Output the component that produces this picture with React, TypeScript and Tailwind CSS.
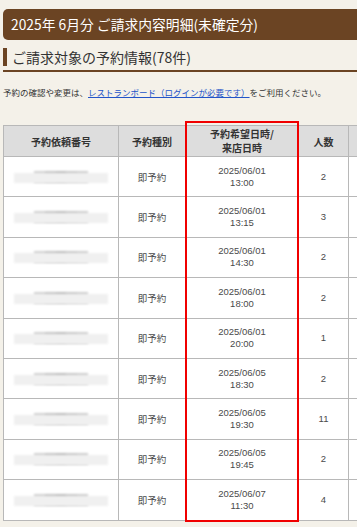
const rows = [
  { date: "2025/06/01", time: "13:00", people: 2 },
  { date: "2025/06/01", time: "13:15", people: 3 },
  { date: "2025/06/01", time: "14:30", people: 2 },
  { date: "2025/06/01", time: "18:00", people: 2 },
  { date: "2025/06/01", time: "20:00", people: 1 },
  { date: "2025/06/05", time: "18:30", people: 2 },
  { date: "2025/06/05", time: "19:30", people: 11 },
  { date: "2025/06/05", time: "19:45", people: 2 },
  { date: "2025/06/07", time: "11:30", people: 4 },
]

function Masked() {
  // blurred-out reservation number
  return (
    <div className="relative h-full">
      <div className="absolute left-[30px] top-1/2 flex h-[12px] w-[54px] -translate-y-1/2 blur-[1px]">
        <div className="flex-1 bg-[#d2d2d2]" />
        <div className="flex-1 bg-[#c4c4c4]" />
        <div className="flex-1 bg-[#bdbdbd]" />
        <div className="flex-1 bg-[#c8c8c8]" />
        <div className="flex-1 bg-[#cfcfcf]" />
      </div>
      <div className="absolute bottom-[-6px] left-[10px] z-10 h-[10px] w-[94px] bg-[#f0f0f0] blur-[1px]" />
    </div>
  )
}

export default function App() {
  return (
    <div className="min-h-screen w-full overflow-hidden bg-[#f4f1e9] font-['Noto_Sans_CJK_JP',sans-serif] text-[#333]">
      <div className="w-[430px] pl-[3px] pt-[9px]">
        <h1 className="flex h-[31px] items-center rounded-l-[5px] bg-[#6b4423] pl-[8px] text-[13.8px] text-white">
          2025年 6月分 ご請求内容明細(未確定分)
        </h1>

        <h2 className="mt-[8px] flex items-stretch border-b-2 border-[#6b4423] pb-[4px] text-[14px] leading-[18px]">
          <span className="mr-[5px] w-[4px] bg-[#6b4423]" />
          ご請求対象の予約情報(78件)
        </h2>

        <p className="mt-[14px] text-[8.5px] leading-[12px] text-[#333]">
          予約の確認や変更は、
          <a className="text-[#2354c8] underline">レストランボード（ログインが必要です）</a>
          をご利用ください。
        </p>

        <div className="relative mt-[27px]">
          <table className="w-[420px] table-fixed border-collapse bg-white text-center text-[9.5px] text-[#4a4a4a]">
            <colgroup>
              <col className="w-[115px]" />
              <col className="w-[67px]" />
              <col className="w-[113px]" />
              <col className="w-[50px]" />
              <col />
            </colgroup>
            <thead>
              <tr className="h-[31px] bg-[#dddddd] text-[10px] font-semibold text-[#333]">
                <th className="border border-[#b8b8b8]">予約依頼番号</th>
                <th className="border border-[#b8b8b8]">予約種別</th>
                <th className="border border-[#b8b8b8]">
                  <span className="block leading-[14px]">予約希望日時/</span>
                  <span className="block leading-[14px]">来店日時</span>
                </th>
                <th className="border border-[#b8b8b8]">人数</th>
                <th className="border border-[#b8b8b8]"></th>
              </tr>
            </thead>
            <tbody>
              {rows.map((r, i) => (
                <tr key={i} className="h-[40.4px]">
                  <td className="border border-[#b8b8b8] p-0">
                    <Masked />
                  </td>
                  <td className="border border-[#b8b8b8]">即予約</td>
                  <td className="border border-[#b8b8b8] font-['Liberation_Sans',sans-serif] text-[9.5px]">
                    <span className="block leading-[12px]">{r.date}</span>
                    <span className="block leading-[12px]">{r.time}</span>
                  </td>
                  <td className="border border-[#b8b8b8] font-['Liberation_Sans',sans-serif]">{r.people}</td>
                  <td className="border border-[#b8b8b8]"></td>
                </tr>
              ))}
            </tbody>
          </table>
          <div className="pointer-events-none absolute left-[182px] top-[-4px] h-[401px] w-[114px] border-2 border-[#f00000]" />
        </div>
      </div>
    </div>
  )
}
